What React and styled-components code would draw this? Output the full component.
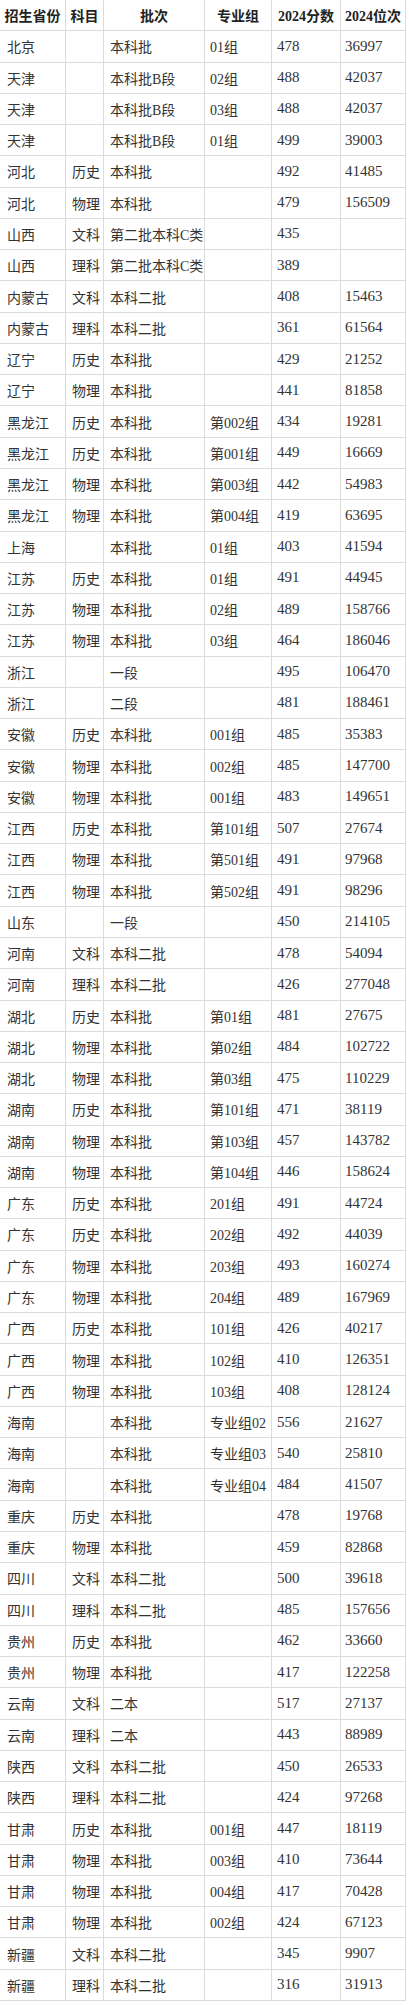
import React from "react";
import styled, { createGlobalStyle } from "styled-components";

const Global = createGlobalStyle`
  html, body { margin: 0; padding: 0; background: #ffffff; }
  body { font-family: "Liberation Serif", "Noto Sans CJK SC", serif; }
`;

const rows = [
  ["北京", "", "本科批", "01组", "478", "36997"],
  ["天津", "", "本科批B段", "02组", "488", "42037"],
  ["天津", "", "本科批B段", "03组", "488", "42037"],
  ["天津", "", "本科批B段", "01组", "499", "39003"],
  ["河北", "历史", "本科批", "", "492", "41485"],
  ["河北", "物理", "本科批", "", "479", "156509"],
  ["山西", "文科", "第二批本科C类", "", "435", ""],
  ["山西", "理科", "第二批本科C类", "", "389", ""],
  ["内蒙古", "文科", "本科二批", "", "408", "15463"],
  ["内蒙古", "理科", "本科二批", "", "361", "61564"],
  ["辽宁", "历史", "本科批", "", "429", "21252"],
  ["辽宁", "物理", "本科批", "", "441", "81858"],
  ["黑龙江", "历史", "本科批", "第002组", "434", "19281"],
  ["黑龙江", "历史", "本科批", "第001组", "449", "16669"],
  ["黑龙江", "物理", "本科批", "第003组", "442", "54983"],
  ["黑龙江", "物理", "本科批", "第004组", "419", "63695"],
  ["上海", "", "本科批", "01组", "403", "41594"],
  ["江苏", "历史", "本科批", "01组", "491", "44945"],
  ["江苏", "物理", "本科批", "02组", "489", "158766"],
  ["江苏", "物理", "本科批", "03组", "464", "186046"],
  ["浙江", "", "一段", "", "495", "106470"],
  ["浙江", "", "二段", "", "481", "188461"],
  ["安徽", "历史", "本科批", "001组", "485", "35383"],
  ["安徽", "物理", "本科批", "002组", "485", "147700"],
  ["安徽", "物理", "本科批", "001组", "483", "149651"],
  ["江西", "历史", "本科批", "第101组", "507", "27674"],
  ["江西", "物理", "本科批", "第501组", "491", "97968"],
  ["江西", "物理", "本科批", "第502组", "491", "98296"],
  ["山东", "", "一段", "", "450", "214105"],
  ["河南", "文科", "本科二批", "", "478", "54094"],
  ["河南", "理科", "本科二批", "", "426", "277048"],
  ["湖北", "历史", "本科批", "第01组", "481", "27675"],
  ["湖北", "物理", "本科批", "第02组", "484", "102722"],
  ["湖北", "物理", "本科批", "第03组", "475", "110229"],
  ["湖南", "历史", "本科批", "第101组", "471", "38119"],
  ["湖南", "物理", "本科批", "第103组", "457", "143782"],
  ["湖南", "物理", "本科批", "第104组", "446", "158624"],
  ["广东", "历史", "本科批", "201组", "491", "44724"],
  ["广东", "历史", "本科批", "202组", "492", "44039"],
  ["广东", "物理", "本科批", "203组", "493", "160274"],
  ["广东", "物理", "本科批", "204组", "489", "167969"],
  ["广西", "历史", "本科批", "101组", "426", "40217"],
  ["广西", "物理", "本科批", "102组", "410", "126351"],
  ["广西", "物理", "本科批", "103组", "408", "128124"],
  ["海南", "", "本科批", "专业组02", "556", "21627"],
  ["海南", "", "本科批", "专业组03", "540", "25810"],
  ["海南", "", "本科批", "专业组04", "484", "41507"],
  ["重庆", "历史", "本科批", "", "478", "19768"],
  ["重庆", "物理", "本科批", "", "459", "82868"],
  ["四川", "文科", "本科二批", "", "500", "39618"],
  ["四川", "理科", "本科二批", "", "485", "157656"],
  ["贵州", "历史", "本科批", "", "462", "33660"],
  ["贵州", "物理", "本科批", "", "417", "122258"],
  ["云南", "文科", "二本", "", "517", "27137"],
  ["云南", "理科", "二本", "", "443", "88989"],
  ["陕西", "文科", "本科二批", "", "450", "26533"],
  ["陕西", "理科", "本科二批", "", "424", "97268"],
  ["甘肃", "历史", "本科批", "001组", "447", "18119"],
  ["甘肃", "物理", "本科批", "003组", "410", "73644"],
  ["甘肃", "物理", "本科批", "004组", "417", "70428"],
  ["甘肃", "物理", "本科批", "002组", "424", "67123"],
  ["新疆", "文科", "本科二批", "", "345", "9907"],
  ["新疆", "理科", "本科二批", "", "316", "31913"],
];

const headers = ["招生省份", "科目", "批次", "专业组", "2024分数", "2024位次"];
const pads = [7, 6, 6, 5, 5, 4];

const Table = styled.div`
  display: grid;
  grid-template-columns: 66px 38px 101px 67px 69px 65px;
  grid-auto-rows: 31.28px;
  width: 406px;
  color: #2b2b2b;
`;

const Cell = styled.div`
  display: flex;
  align-items: center;
  justify-content: ${(p) => (p.$head ? "center" : "flex-start")};
  padding-left: ${(p) => (p.$head ? 0 : p.$pad)}px;
  border-right: 1px solid #dcdcdc;
  border-bottom: 1px solid #dcdcdc;
  box-sizing: border-box;
  white-space: nowrap;
  overflow: hidden;
  font-size: ${(p) => (p.$num ? 15 : 14)}px;
  font-weight: ${(p) => (p.$head ? 700 : 400)};
  color: ${(p) => (p.$head ? "#222" : "#333")};
  font-family: "Liberation Serif", "Noto Sans CJK SC", serif;
`;

export default function App() {
  return (
    <>
      <Global />
      <Table>
        {headers.map((h, i) => (
          <Cell key={"h" + i} $head>
            {h}
          </Cell>
        ))}
        {rows.map((r, ri) =>
          r.map((c, ci) => (
            <Cell key={ri + "-" + ci} $pad={pads[ci]} $num={ci >= 4}>
              {c}
            </Cell>
          ))
        )}
      </Table>
    </>
  );
}
